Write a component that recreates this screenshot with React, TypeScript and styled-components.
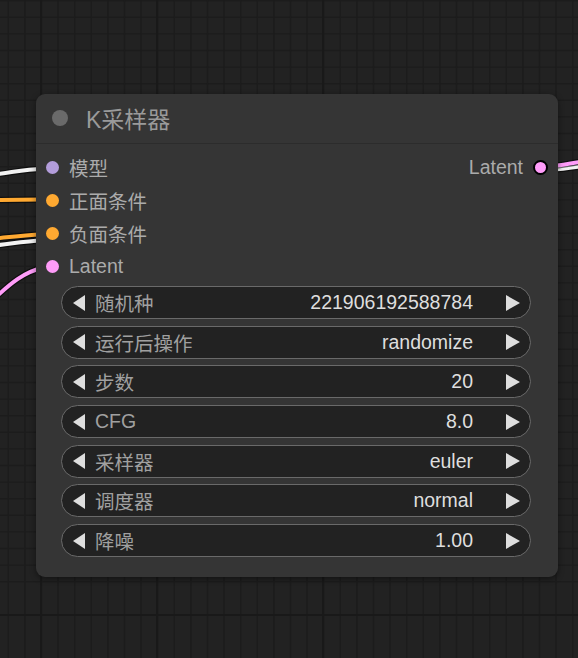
import React from 'react';
import styled, { createGlobalStyle } from 'styled-components';

const GlobalStyle = createGlobalStyle`
  html, body {
    margin: 0;
    padding: 0;
    background: #222222;
    overflow: hidden;
  }
`;

const Canvas = styled.div`
  position: relative;
  width: 578px;
  height: 658px;
  background: #222222;
  font-family: 'Liberation Sans', 'Noto Sans CJK SC', sans-serif;
`;

const Backdrop = styled.svg`
  position: absolute;
  inset: 0;
`;

const Node = styled.div`
  position: absolute;
  left: 36px;
  top: 94px;
  width: 522px;
  display: flex;
  flex-direction: column;
  background: #353535;
  border-radius: 9px;
  box-shadow: 0 2px 6px rgba(0, 0, 0, 0.45);
`;

const TitleBar = styled.div`
  height: 50px;
  display: flex;
  align-items: center;
  gap: 18px;
  padding: 0 0 2px 16px;
  border-bottom: 1px solid #2c2c2c;
  box-sizing: border-box;
`;

const TitleDot = styled.span`
  width: 16px;
  height: 16px;
  margin-top: 1px;
  border-radius: 50%;
  background: #6a6a6a;
`;

const Title = styled.span`
  font-size: 23px;
  color: #9a9a9a;
`;

const Body = styled.div`
  display: flex;
  flex-direction: column;
  padding: 7px 0 20px;
`;

const SlotRow = styled.div`
  height: 33px;
  display: flex;
  align-items: center;
  justify-content: space-between;
`;

const Slot = styled.div<{ $right?: boolean }>`
  display: flex;
  align-items: center;
  gap: 10px;
  padding: ${(p) => (p.$right ? '0 10px 0 0' : '0 0 0 10px')};
  font-size: 19.5px;
  color: #ababab;
`;

const SlotDot = styled.span<{ $color: string; $outlined?: boolean }>`
  width: ${(p) => (p.$outlined ? 11 : 13)}px;
  height: ${(p) => (p.$outlined ? 11 : 13)}px;
  border-radius: 50%;
  background: ${(p) => p.$color};
  border: ${(p) => (p.$outlined ? '2px solid #000' : 'none')};
`;

const Widgets = styled.div`
  display: flex;
  flex-direction: column;
  gap: 6.7px;
  margin: 3px 27px 0 25px;
`;

const Widget = styled.div`
  height: 33px;
  box-sizing: border-box;
  display: flex;
  align-items: center;
  padding: 0 10px 0 11px;
  background: #222222;
  border: 1.6px solid #6a6a6a;
  border-radius: 17px;
  font-size: 19.5px;
`;

const Arrow = styled.span<{ $dir: 'left' | 'right' }>`
  width: 0;
  height: 0;
  border-top: 8px solid transparent;
  border-bottom: 8px solid transparent;
  ${(p) =>
    p.$dir === 'left'
      ? 'border-right: 12px solid #dedede;'
      : 'border-left: 14px solid #dedede;'}
`;

const Label = styled.span`
  flex: 1;
  margin-left: 10px;
  color: #a0a0a0;
`;

const Value = styled.span`
  margin-right: 33px;
  color: #dedede;
`;

const inputs = [
  { name: '模型', color: '#b39ddb' },
  { name: '正面条件', color: '#ffa931' },
  { name: '负面条件', color: '#ffa931' },
  { name: 'Latent', color: '#ff9cf9' },
];

const widgets = [
  { label: '随机种', value: '221906192588784' },
  { label: '运行后操作', value: 'randomize' },
  { label: '步数', value: '20' },
  { label: 'CFG', value: '8.0' },
  { label: '采样器', value: 'euler' },
  { label: '调度器', value: 'normal' },
  { label: '降噪', value: '1.00' },
];

const Wire = ({ d, color }: { d: string; color: string }) => (
  <g fill="none" strokeLinecap="round">
    <path d={d} stroke="rgba(0,0,0,0.55)" strokeWidth={6.5} />
    <path d={d} stroke={color} strokeWidth={4} />
  </g>
);

const Grid = () => {
  const minor = [];
  for (let i = 0; i < 36; i++) {
    const x = 8.3 + i * 16.6;
    const y = 0.7 + i * 16.6;
    minor.push(<line key={'v' + i} x1={x} y1={0} x2={x} y2={658} />);
    minor.push(<line key={'h' + i} x1={0} y1={y} x2={578} y2={y} />);
  }
  return (
    <>
      <g stroke="#1c1c1c" strokeWidth={1.4}>{minor}</g>
      <g stroke="#191919" strokeWidth={2}>
        <line x1={41} y1={0} x2={41} y2={658} />
        <line x1={157} y1={0} x2={157} y2={658} />
        <line x1={323} y1={0} x2={323} y2={658} />
        <line x1={0} y1={615} x2={578} y2={615} />
      </g>
    </>
  );
};

const App = () => (
  <Canvas>
    <GlobalStyle />
    <Backdrop width={578} height={658}>
      <Grid />
      <Wire d="M -10 175 C 10 173, 25 169, 42 169" color="#f2f2f2" />
      <Wire d="M -10 200 L 42 199.5" color="#ffa931" />
      <Wire d="M -10 246 C 10 244, 25 241, 42 240.5" color="#f2f2f2" />
      <Wire d="M -10 239 C 10 237, 25 235, 42 234.5" color="#ffa931" />
      <Wire d="M -4 297 C 10 284, 24 272, 42 268" color="#ff9cf9" />
      <Wire d="M 552 169.5 C 565 169, 575 167, 590 165" color="#f2f2f2" />
      <Wire d="M 552 166 C 565 165, 575 163, 590 160" color="#ff9cf9" />
    </Backdrop>
    <Node>
      <TitleBar>
        <TitleDot />
        <Title>K采样器</Title>
      </TitleBar>
      <Body>
        {inputs.map((input, i) => (
          <SlotRow key={input.name}>
            <Slot>
              <SlotDot $color={input.color} />
              {input.name}
            </Slot>
            {i === 0 && (
              <Slot $right>
                Latent
                <SlotDot $color="#ff9cf9" $outlined />
              </Slot>
            )}
          </SlotRow>
        ))}
        <Widgets>
          {widgets.map((w) => (
            <Widget key={w.label}>
              <Arrow $dir="left" />
              <Label>{w.label}</Label>
              <Value>{w.value}</Value>
              <Arrow $dir="right" />
            </Widget>
          ))}
        </Widgets>
      </Body>
    </Node>
  </Canvas>
);

export default App;
